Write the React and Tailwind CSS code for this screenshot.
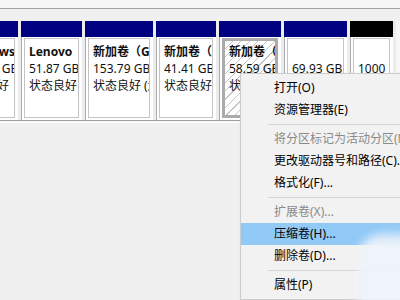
const volumes = [
	{ width: "w-[65px] -ml-[47px]", head: "bg-[#000080]", lines: ["Windows (C:)", "117.19 GB", "状态良好"] },
	{ width: "w-[61px]", head: "bg-[#000080]", lines: ["Lenovo", "51.87 GB", "状态良好"] },
	{ width: "w-[68px]", head: "bg-[#000080]", lines: ["新加卷（G:)", "153.79 GB", "状态良好 (逻辑分区)"] },
	{ width: "w-[60px]", head: "bg-[#000080]", lines: ["新加卷（H:)", "41.41 GB", "状态良好 (逻辑分区)"] },
	{ width: "w-[62px]", head: "bg-[#000080]", lines: ["新加卷（I:)", "58.59 GB", "状态良好 (逻辑分区)"], selected: true },
	{ width: "w-[63px]", head: "bg-[#000080]", lines: ["", "69.93 GB", ""] },
	{ width: "w-[43px]", head: "bg-black", lines: ["", "1000", ""] },
];

const menu = [
	{ label: "打开(O)" },
	{ label: "资源管理器(E)" },
	{ sep: true },
	{ label: "将分区标记为活动分区(M)", disabled: true },
	{ label: "更改驱动器号和路径(C)..." },
	{ label: "格式化(F)..." },
	{ sep: true },
	{ label: "扩展卷(X)...", disabled: true },
	{ label: "压缩卷(H)...", active: true },
	{ label: "删除卷(D)..." },
	{ sep: true },
	{ label: "属性(P)" },
];

function Lines({ name, size, status }) {
	return (
		<div className="leading-[17px] text-[12px] text-[#111] whitespace-nowrap">
			<p className="font-bold h-[17px]">{name}</p>
			<p className="h-[17px]">{size}</p>
			<p className="h-[17px]">{status}</p>
		</div>
	);
}

function Volume({ vol }) {
	const [name, size, status] = vol.lines;
	return (
		<div className={`${vol.width} shrink-0 flex flex-col`}>
			<div className={`h-[16px] ${vol.head}`} />
			<div className="flex-1 bg-white pt-[1px] pl-[2px] pr-[3px] pb-[2px] border-l border-[#acacac]">
				{vol.selected ? (
					<div className="h-full border-[3px] border-[#ababab] px-[4px] pt-[2px] overflow-hidden bg-[repeating-linear-gradient(135deg,#ffffff_0px,#ffffff_5px,#c4c4c4_5px,#c4c4c4_6px)]">
						<Lines name={name} size={size} status={status} />
					</div>
				) : (
					<div className="h-full border border-[#c4c4c4] px-[4px] pt-[4px] overflow-hidden">
						<Lines name={name} size={size} status={status} />
					</div>
				)}
			</div>
		</div>
	);
}

function ContextMenu() {
	return (
		<div className="absolute left-[240px] top-[73px] w-[190px] bg-[#f2f2f2] border border-[#cccccc] pt-[3px] pb-[3px] shadow-[2px_2px_3px_rgba(0,0,0,0.25)]">
			{menu.map((item, i) =>
				item.sep ? (
					<div key={i} className="h-[7px] flex items-center">
						<div className="ml-[27px] flex-1 h-px bg-[#d5d5d5]" />
					</div>
				) : (
					<div
						key={i}
						className={`h-[22px] flex items-center pl-[33px] whitespace-nowrap ${item.active ? "bg-[#91c9f7]" : ""} ${item.disabled ? "text-[#8a8a8a]" : "text-[#000]"}`}
					>
						{item.label}
					</div>
				)
			)}
		</div>
	);
}

export default function App() {
	return (
		<div className="relative w-[400px] h-[300px] overflow-hidden bg-[#f0f0f0] font-['Noto_Sans','Noto_Sans_CJK_SC',sans-serif] text-[12px]">
			<div className="h-[8px] bg-[#f7f7f7]" />
			<div className="h-px bg-[#a3a3a3]" />
			<div className="h-[12px] bg-[#f0f0f0]" />
			<div className="flex h-[100px] gap-[3px] bg-[#ececec] border-b border-[#9d9d9d]">
				{volumes.map((vol, i) => (
					<Volume key={i} vol={vol} />
				))}
				<div className="flex-1 bg-[#f7f7f7]" />
			</div>
			<div className="h-[2px] bg-[#fafafa]" />
			<ContextMenu />
			{/* soft glow bottom right */}
			<div className="absolute left-[358px] top-[234px] w-[70px] h-[90px] rounded-tl-[24px] bg-[#eef4fb]/90 blur-[5px]" />
		</div>
	);
}
